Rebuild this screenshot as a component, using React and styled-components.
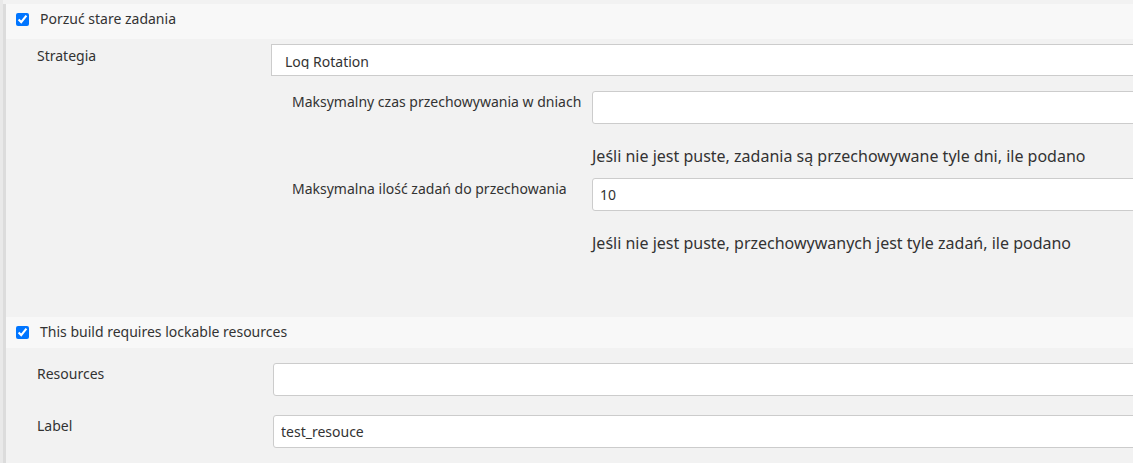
import React from 'react'
import styled, { createGlobalStyle } from 'styled-components'

const GlobalStyle = createGlobalStyle`
  html, body {
    margin: 0;
    padding: 0;
    background: #f2f2f2;
  }
  body {
    font-family: "Noto Sans", "Open Sans", sans-serif;
    color: #333;
  }
`

const App = () => {
  return (
    <>
      <GlobalStyle />
      <Frame>
        <Rail>
          <Section>
            <SectionHeader $height={35}>
              <Checkbox defaultChecked />
              Porzuć stare zadania
            </SectionHeader>
            <SectionBody $top={5} $bottom={52}>
              <Row $labelWidth={234}>
                <Label $top={3}>Strategia</Label>
                <div>
                  <Select>
                    <SelectText>Log Rotation</SelectText>
                  </Select>
                  <Nested>
                    <Row $labelWidth={300}>
                      <Label $top={2}>Maksymalny czas przechowywania w dniach</Label>
                      <div>
                        <TextInput defaultValue="" />
                        <Description>Jeśli nie jest puste, zadania są przechowywane tyle dni, ile podano</Description>
                      </div>
                    </Row>
                    <Row $labelWidth={300}>
                      <Label $top={2}>Maksymalna ilość zadań do przechowania</Label>
                      <div>
                        <TextInput defaultValue="10" />
                        <Description>Jeśli nie jest puste, przechowywanych jest tyle zadań, ile podano</Description>
                      </div>
                    </Row>
                  </Nested>
                </div>
              </Row>
            </SectionBody>
          </Section>

          <Section>
            <SectionHeader $height={31}>
              <Checkbox defaultChecked />
              This build requires lockable resources
            </SectionHeader>
            <SectionBody $top={15} $gap={19} $bottom={16}>
              <Row $labelWidth={236}>
                <Label $top={2}>Resources</Label>
                <TextInput defaultValue="" />
              </Row>
              <Row $labelWidth={236}>
                <Label $top={2}>Label</Label>
                <TextInput defaultValue="test_resouce" />
              </Row>
            </SectionBody>
          </Section>
        </Rail>
      </Frame>
    </>
  )
}

const Frame = styled.div`
  padding-top: 4px;
  border-left: 3px solid #e9e9e9;
  min-height: 459px;
  overflow: hidden;
`

const Rail = styled.div`
  border-left: 3px solid #dcdcdc;
  min-height: 459px;
`

const Section = styled.div`
  display: flex;
  flex-direction: column;
`

const SectionHeader = styled.label`
  display: flex;
  align-items: flex-start;
  box-sizing: border-box;
  height: ${p => p.$height}px;
  padding: 6px 0 0 10px;
  background: #f8f8f8;
  font-size: 14px;
  line-height: 18px;
`

const Checkbox = styled.input.attrs({ type: 'checkbox' })`
  width: 13px;
  height: 13px;
  margin: 3px 11px 0 0;
  accent-color: #0075ff;
`

const SectionBody = styled.div`
  display: flex;
  flex-direction: column;
  gap: ${p => p.$gap || 0}px;
  padding: ${p => p.$top}px 0 ${p => p.$bottom}px 31px;
`

const Row = styled.div`
  display: grid;
  grid-template-columns: ${p => p.$labelWidth}px 1fr;
  align-items: start;
`

const Label = styled.div`
  font-size: 14px;
  line-height: 18px;
  padding-top: ${p => p.$top}px;
`

const Select = styled.div`
  box-sizing: border-box;
  width: calc(100% + 20px);
  height: 32px;
  border: 1px solid #ccc;
  background: #fff;
  padding: 8px 0 0 13px;
  font-size: 14px;
  line-height: 18px;
`

const SelectText = styled.span`
  display: block;
  height: 16px;
  overflow: hidden;
`

const Nested = styled.div`
  display: flex;
  flex-direction: column;
  padding: 15px 0 0 21px;
`

const TextInput = styled.input.attrs({ type: 'text' })`
  display: block;
  box-sizing: border-box;
  width: calc(100% + 20px);
  height: 33px;
  margin: 0;
  padding: 0 7px;
  border: 1px solid #ccc;
  border-radius: 3px;
  background: #fff;
  font-family: "Noto Sans", "Open Sans", sans-serif;
  font-size: 14px;
  color: #333;
  outline: none;
`

const Description = styled.div`
  margin: 22px 0 12px;
  font-size: 16px;
  line-height: 20px;
`

export default App
